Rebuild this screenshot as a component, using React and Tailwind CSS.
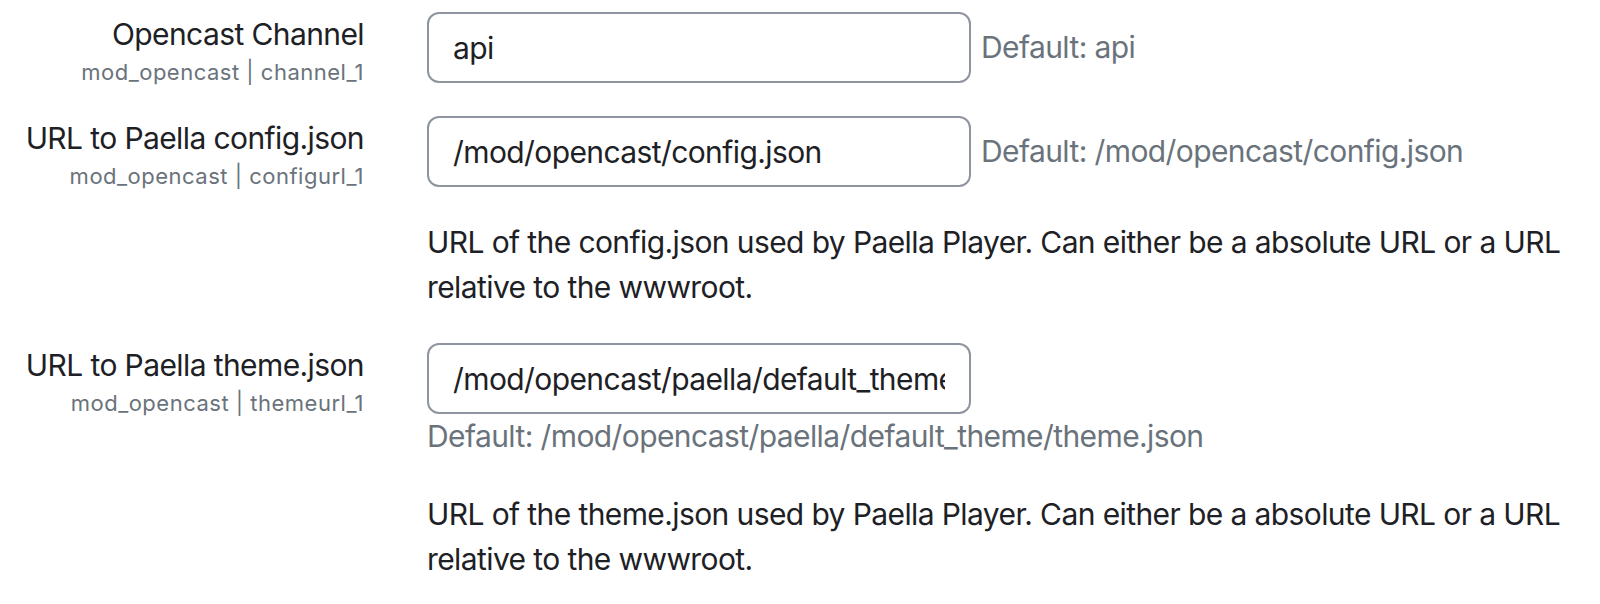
import React from "react";

const settings = [
  {
    label: "Opencast Channel",
    name: "mod_opencast | channel_1",
    value: "api",
    defaultValue: "api",
    inlineDefault: true,
    description: null,
  },
  {
    label: "URL to Paella config.json",
    name: "mod_opencast | configurl_1",
    value: "/mod/opencast/config.json",
    defaultValue: "/mod/opencast/config.json",
    inlineDefault: true,
    description:
      "URL of the config.json used by Paella Player. Can either be a absolute URL or a URL relative to the wwwroot.",
  },
  {
    label: "URL to Paella theme.json",
    name: "mod_opencast | themeurl_1",
    value: "/mod/opencast/paella/default_theme/theme.json",
    defaultValue: "/mod/opencast/paella/default_theme/theme.json",
    inlineDefault: false,
    description:
      "URL of the theme.json used by Paella Player. Can either be a absolute URL or a URL relative to the wwwroot.",
  },
];

function SettingRow({ setting }) {
  return (
    <div className="flex">
      {/* label column hangs 4px past the row, the input sets the row height */}
      <div className="mb-[-4px] w-[364px] shrink-0 text-right">
        <div className="text-[30px] leading-[45px] tracking-[-0.6px] text-[#1d2125]">{setting.label}</div>
        <div className="text-[22px] leading-[30px] tracking-[0.5px] text-[#6a737b]">{setting.name}</div>
      </div>
      <div className="ml-[63px] flex-1 pr-[20px]">
        <div className="flex flex-wrap items-center">
          <input
            readOnly
            defaultValue={setting.value}
            className="h-[71px] w-[544px] rounded-[12px] border-2 border-[#8f959e] bg-white px-[24px] text-[30px] tracking-[-0.6px] text-[#1d2125] outline-none"
          />
          {setting.inlineDefault ? (
            <div className="ml-[10px] text-[30px] leading-[45px] tracking-[-0.6px] text-[#6a737b]">
              Default: {setting.defaultValue}
            </div>
          ) : (
            <div className="w-full text-[30px] leading-[45px] tracking-[-0.6px] text-[#6a737b]">
              Default: {setting.defaultValue}
            </div>
          )}
        </div>
        {setting.description && (
          <p className="mt-[33px] text-[30px] leading-[45px] tracking-[-0.6px] text-[#1d2125]">
            {setting.description}
          </p>
        )}
      </div>
    </div>
  );
}

export default function App() {
  return (
    <div className="min-h-[604px] bg-white pt-[12px] font-['Inter',sans-serif]">
      <div className="flex flex-col gap-[33px]">
        {settings.map((s) => (
          <SettingRow key={s.name} setting={s} />
        ))}
      </div>
    </div>
  );
}
